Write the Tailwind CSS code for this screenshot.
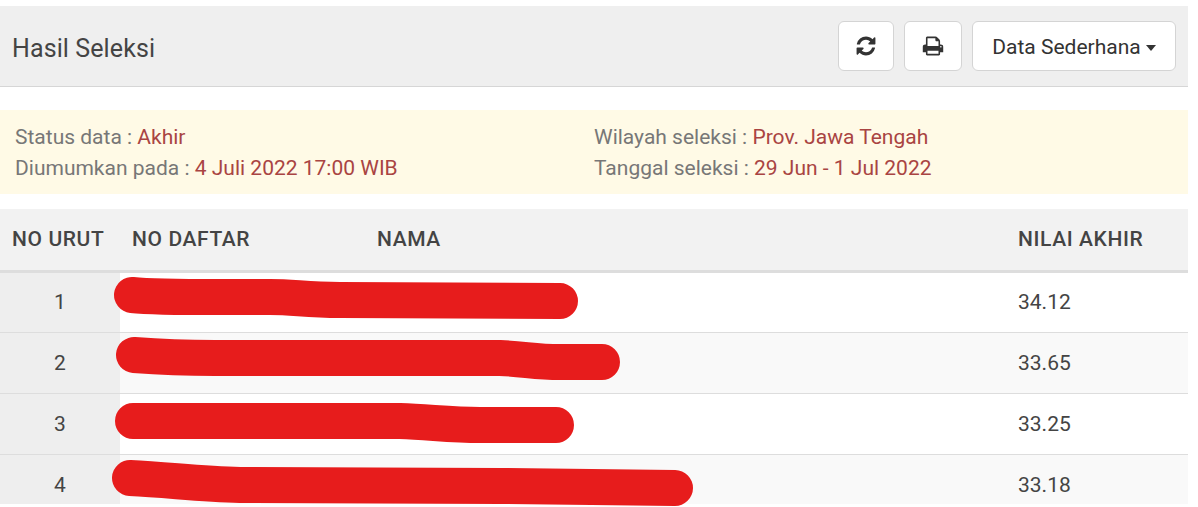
<!DOCTYPE html>
<html lang="en">
<head>
    <meta charset="UTF-8">
    <title>Hasil Seleksi</title>
    <script src="https://cdn.jsdelivr.net/npm/@tailwindcss/browser@4"></script>
</head>
<body class="bg-white text-[#444] font-['Roboto',sans-serif] overflow-hidden">
    <div class="relative w-[1188px] h-[507px] overflow-hidden pt-[6px]">
        <div class="h-[81px] bg-[#efefef] border-b border-[#d6d6d6] flex items-center justify-between pl-3 pr-3">
            <h3 class="text-[25px] leading-none tracking-[0.1px] text-[#444] mt-[5px]">Hasil Seleksi</h3>
            <div class="flex items-center gap-[10px] mb-[1px]">
                <button class="w-[56px] h-[50px] bg-white border border-[#d4d4d4] rounded-md flex items-center justify-center">
                    <svg class="w-[22px] h-[22px]" viewBox="0 0 1792 1792" fill="#333"><path d="M1639 1056q0 5-1 7-64 268-268 434.5t-478 166.5q-146 0-282.5-55t-243.5-157l-129 129q-19 19-45 19t-45-19-19-45v-448q0-26 19-45t45-19h448q26 0 45 19t19 45-19 45l-137 137q71 66 161 102t187 36q134 0 250-65t186-179q11-17 53-117 8-23 30-23h192q13 0 22.5 9.5t9.5 22.5zm25-800v448q0 26-19 45t-45 19h-448q-26 0-45-19t-19-45 19-45l138-138q-148-137-349-137-134 0-250 65t-186 179q-11 17-53 117-8 23-30 23h-199q-13 0-22.5-9.5t-9.5-22.5v-7q65-268 270-434.5t480-166.5q146 0 284 55.5t245 156.5l130-129q19-19 45-19t45 19 19 45z"/></svg>
                </button>
                <button class="w-[58px] h-[50px] bg-white border border-[#d4d4d4] rounded-md flex items-center justify-center">
                    <svg class="w-[22px] h-[22px]" viewBox="0 0 1792 1792" fill="#333"><path d="M448 1536h896v-256h-896v256zm0-640h896v-384h-160q-40 0-68-28t-28-68v-160h-640v640zm1152 64q0-26-19-45t-45-19-45 19-19 45 19 45 45 19 45-19 19-45zm128 0v416q0 13-9.5 22.5t-22.5 9.5h-224v160q0 40-28 68t-68 28h-960q-40 0-68-28t-28-68v-160h-224q-13 0-22.5-9.5t-9.5-22.5v-416q0-79 56.5-135.5t135.5-56.5h64v-544q0-40 28-68t68-28h672q40 0 88 20t76 48l152 152q28 28 48 76t20 88v256h64q79 0 135.5 56.5t56.5 135.5z"/></svg>
                </button>
                <button class="w-[204px] h-[50px] pt-[5px] bg-white border border-[#d4d4d4] rounded-md flex items-center justify-center gap-[5px] text-[21px] text-[#333]">
                    Data Sederhana
                    <span class="w-0 h-0 border-x-[5px] border-x-transparent border-t-[6px] border-t-[#333] -mt-[1px]"></span>
                </button>
            </div>
        </div>

        <div class="mt-[23px] h-[84px] bg-[#fffae6] pl-[15px] py-[12px] grid grid-cols-[579px_1fr] text-[21px] leading-[30px] text-[#777]">
            <div>
                <div>Status data : <span class="text-[#a94442]">Akhir</span></div>
                <div class="pt-[1px]">Diumumkan pada : <span class="text-[#a94442]">4 Juli 2022 17:00 WIB</span></div>
            </div>
            <div>
                <div>Wilayah seleksi : <span class="text-[#a94442]">Prov. Jawa Tengah</span></div>
                <div class="pt-[1px]">Tanggal seleksi : <span class="text-[#a94442]">29 Jun - 1 Jul 2022</span></div>
            </div>
        </div>

        <div class="mt-[15px] h-[295px] overflow-hidden">
            <table class="w-[1188px] table-fixed border-collapse text-[21px]">
                <colgroup>
                    <col class="w-[120px]">
                    <col class="w-[245px]">
                    <col class="w-[641px]">
                    <col class="w-[182px]">
                </colgroup>
                <thead>
                    <tr class="h-[62px] bg-[#f2f2f2] border-b-[3px] border-[#dddddd] text-left font-medium tracking-[0.6px]">
                        <th class="pl-3 font-medium whitespace-nowrap">NO URUT</th>
                        <th class="pl-3 font-medium whitespace-nowrap">NO DAFTAR</th>
                        <th class="pl-3 font-medium">NAMA</th>
                        <th class="pl-3 font-medium whitespace-nowrap">NILAI AKHIR</th>
                    </tr>
                </thead>
                <tbody>
                    <tr class="h-[61px] border-b border-[#dddddd]">
                        <td class="pt-[2px] bg-[#eeeeee] text-center">1</td><td></td><td></td><td class="pl-3 pt-[2px]">34.12</td>
                    </tr>
                    <tr class="h-[61px] border-b border-[#dddddd] bg-[#f9f9f9]">
                        <td class="pt-[2px] bg-[#eeeeee] text-center">2</td><td></td><td></td><td class="pl-3 pt-[2px]">33.65</td>
                    </tr>
                    <tr class="h-[61px] border-b border-[#dddddd]">
                        <td class="pt-[2px] bg-[#eeeeee] text-center">3</td><td></td><td></td><td class="pl-3 pt-[2px]">33.25</td>
                    </tr>
                    <tr class="h-[61px] border-b border-[#dddddd] bg-[#f9f9f9]">
                        <td class="pt-[2px] bg-[#eeeeee] text-center">4</td><td></td><td></td><td class="pl-3 pt-[2px]">33.18</td>
                    </tr>
                </tbody>
            </table>
        </div>

        <!-- red marker strokes over the names -->
        <svg class="absolute left-0 top-0 pointer-events-none" width="1188" height="507" fill="none" stroke="#e71c1c" stroke-width="36" stroke-linecap="round" stroke-linejoin="round">
            <path d="M132 295 C160 298 220 297 270 297 C295 297 305 300 340 300 L560 301"/>
            <path d="M134 355 C160 357 190 358 215 358 L500 358 C525 359 535 362 560 362 L602 362"/>
            <path d="M133 421 L400 421 C430 422 450 425 480 425 L556 425"/>
            <path d="M130 478 C170 480 200 484 240 485 L500 486 L675 488"/>
        </svg>
    </div>
</body>
</html>
